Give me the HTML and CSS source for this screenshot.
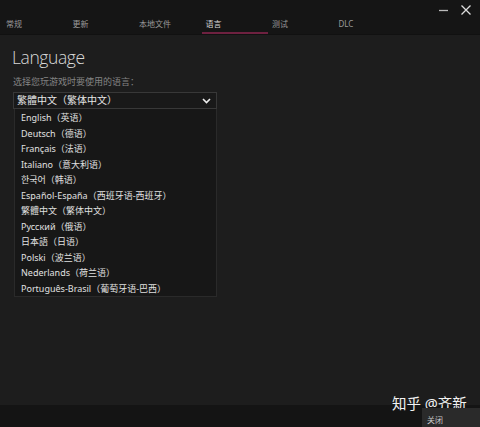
FILE: index.html
```html
<!DOCTYPE html>
<html>
<head>
    <meta charset="UTF-8">
    <title>Settings</title>
    <link rel="stylesheet" href="styles.css">
</head>
<body>
    <div id="window">
        <div id="titlebar">
            <div id="tabs">
                <div class="tab">常规</div>
                <div class="tab">更新</div>
                <div class="tab">本地文件</div>
                <div class="tab active">语言</div>
                <div class="tab">测试</div>
                <div class="tab">DLC</div>
            </div>
            <div id="controls">
                <svg width="12" height="12" viewBox="0 0 12 12"><path d="M1 6.5H10" stroke="#bbb" stroke-width="1.3"/></svg>
                <svg width="12" height="12" viewBox="0 0 12 12"><path d="M1.5 1.5L10.5 10.5M10.5 1.5L1.5 10.5" stroke="#ddd" stroke-width="1.3"/></svg>
            </div>
        </div>
        <div id="content">
            <h1>Language</h1>
            <div class="label">选择您玩游戏时要使用的语言：</div>
            <div class="select">
                <span>繁體中文（繁体中文）</span>
                <svg width="9" height="6" viewBox="0 0 9 6"><path d="M1 1L4.5 4.5L8 1" stroke="#eee" stroke-width="1.6" fill="none"/></svg>
            </div>
            <div class="options">
                <div class="option">English（英语）</div>
                <div class="option">Deutsch（德语）</div>
                <div class="option">Français（法语）</div>
                <div class="option">Italiano（意大利语）</div>
                <div class="option">한국어（韩语）</div>
                <div class="option">Español-España（西班牙语-西班牙）</div>
                <div class="option">繁體中文（繁体中文）</div>
                <div class="option">Русский（俄语）</div>
                <div class="option">日本語（日语）</div>
                <div class="option">Polski（波兰语）</div>
                <div class="option">Nederlands（荷兰语）</div>
                <div class="option">Português-Brasil（葡萄牙语-巴西）</div>
            </div>
        </div>
        <div id="footer">
            <div class="watermark">知乎 @齐新</div>
            <div class="close-btn">关闭</div>
        </div>
    </div>
</body>
</html>
```

FILE: styles.css
```css
body {
    margin: 0;
    padding: 0;
    background-color: #1c1c1c;
    font-family: "Noto Sans", "Noto Sans CJK SC", sans-serif;
    overflow: hidden;
}
#window {
    width: 480px;
    height: 427px;
    display: flex;
    flex-direction: column;
}
#titlebar {
    height: 34px;
    background-color: #151515;
    display: flex;
    justify-content: space-between;
    border-bottom: 1px solid #111;
}
#tabs {
    display: flex;
    align-items: flex-end;
    padding-left: 2px;
}
.tab {
    width: 66.5px;
    height: 15px;
    padding: 0 0 3px 4px;
    box-sizing: border-box;
    font-size: 8px;
    line-height: 10px;
    color: #9a9a9a;
    border-bottom: 2px solid transparent;
}
.tab.active {
    color: #d6d6d6;
    border-bottom-color: #6e2140;
}
#controls {
    display: flex;
    gap: 10px;
    padding: 4px 8px 0 0;
}
#content {
    flex: 1;
    padding: 11px 0 0 13px;
    background-color: #1d1d1d;
}
h1 {
    margin: 0 0 8px -1px;
    font-family: "Open Sans", "Noto Sans CJK SC", sans-serif;
    font-weight: 300;
    font-size: 17.5px;
    letter-spacing: -0.4px;
    line-height: 22px;
    color: #d8d8d8;
}
.label {
    font-size: 9px;
    line-height: 12px;
    color: #858585;
    margin-bottom: 4px;
}
.select {
    width: 194px;
    height: 15px;
    border: 1px solid #383838;
    background-color: #191919;
    display: flex;
    align-items: center;
    justify-content: space-between;
    padding: 0 5px 0 3px;
    box-sizing: content-box;
    font-size: 10px;
    color: #e6e6e6;
}
.select span {
    line-height: 15px;
}
.options {
    width: 201px;
    background-color: #171717;
    border: 1px solid #2a2a2a;
    border-top: none;
    box-sizing: content-box;
    padding: 1px 0 0 0;
    margin-left: 1px;
}
.option {
    height: 15.5px;
    line-height: 15.5px;
    padding-left: 6px;
    font-size: 9px;
    color: #e0e0e0;
}
#footer {
    height: 22px;
    background-color: #141414;
    position: relative;
}
.watermark {
    position: absolute;
    left: 392px;
    top: -11px;
    font-size: 14.5px;
    line-height: 18px;
    color: #f2f2f2;
}
.close-btn {
    position: absolute;
    right: 0;
    top: 3px;
    width: 58px;
    height: 19px;
    background-color: #2a2a2a;
    font-size: 8px;
    line-height: 10px;
    padding: 7px 0 0 5px;
    box-sizing: border-box;
    color: #c8c8c8;
}
```
